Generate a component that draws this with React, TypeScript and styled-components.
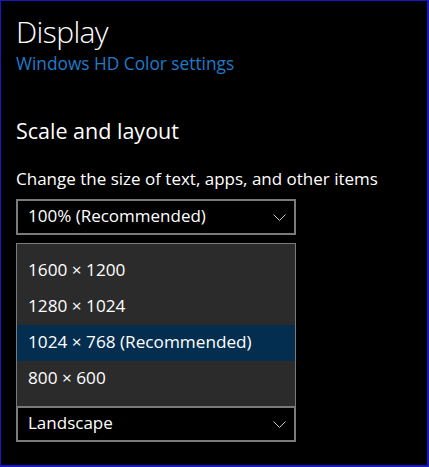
import React from 'react';
import styled, { createGlobalStyle } from 'styled-components';

const GlobalStyle = createGlobalStyle`
  html, body {
    margin: 0;
    padding: 0;
    background: #000;
  }
  body {
    font-family: "Open Sans", "Noto Sans", "Liberation Sans", sans-serif;
    color: #fff;
  }
`;

const Frame = styled.div`
  width: 429px;
  height: 467px;
  box-sizing: border-box;
  background: #000;
  border: solid #1616c8;
  border-width: 1px 2px 2px 1px;
  padding: 13px 15px 0;
  overflow: hidden;
`;

const Title = styled.h1`
  margin: 0;
  font-size: 30px;
  font-weight: 300;
  line-height: 36px;
  letter-spacing: -0.6px;
`;

const Link = styled.a`
  display: block;
  margin-top: 4px;
  color: #1f7bcc;
  font-size: 17.3px;
  line-height: 20px;
  text-decoration: none;
`;

const SectionTitle = styled.h2`
  margin: 43px 0 0;
  font-size: 21.5px;
  font-weight: 400;
  line-height: 28px;
`;

const Field = styled.div`
  display: flex;
  flex-direction: column;
  gap: 10px;
  margin-top: 24px;
`;

const Label = styled.div`
  font-size: 17px;
  line-height: 20px;
`;

const Select = styled.div`
  width: 280px;
  height: 36px;
  box-sizing: border-box;
  border: 2px solid #7a7a7a;
  display: flex;
  align-items: center;
  justify-content: space-between;
  padding: 0 8px 3px 10px;
  font-size: 17px;
`;

const Chevron = () => (
  <svg width="13" height="7" viewBox="0 0 13 7" style={{ marginTop: 3 }}>
    <polyline points="0.5,0.5 6.5,6.5 12.5,0.5" fill="none" stroke="#c8c8c8" strokeWidth="1" />
  </svg>
);

// open list of the resolution dropdown
const Popup = styled.ul`
  width: 280px;
  box-sizing: border-box;
  margin: 8px 0 0;
  padding: 9px 0;
  list-style: none;
  background: #2b2b2b;
  border: 1px solid #7a7a7a;
  border-bottom: none;
`;

const Item = styled.li<{ $selected?: boolean }>`
  height: 36px;
  box-sizing: border-box;
  display: flex;
  align-items: center;
  padding: 0 0 3px 11px;
  font-size: 17.2px;
  background: ${(p) => (p.$selected ? '#032e4f' : 'transparent')};
`;

const resolutions = [
  { label: '1600 × 1200' },
  { label: '1280 × 1024' },
  { label: '1024 × 768 (Recommended)', selected: true },
  { label: '800 × 600' },
];

export default function App() {
  return (
    <>
      <GlobalStyle />
      <Frame>
        <Title>Display</Title>
        <Link href="#hdr">Windows HD Color settings</Link>

        <SectionTitle>Scale and layout</SectionTitle>
        <Field>
          <Label>Change the size of text, apps, and other items</Label>
          <Select>
            100% (Recommended)
            <Chevron />
          </Select>
        </Field>

        <Popup>
          {resolutions.map((r) => (
            <Item key={r.label} $selected={r.selected}>
              {r.label}
            </Item>
          ))}
        </Popup>
        <Select>
          Landscape
          <Chevron />
        </Select>
      </Frame>
    </>
  );
}
